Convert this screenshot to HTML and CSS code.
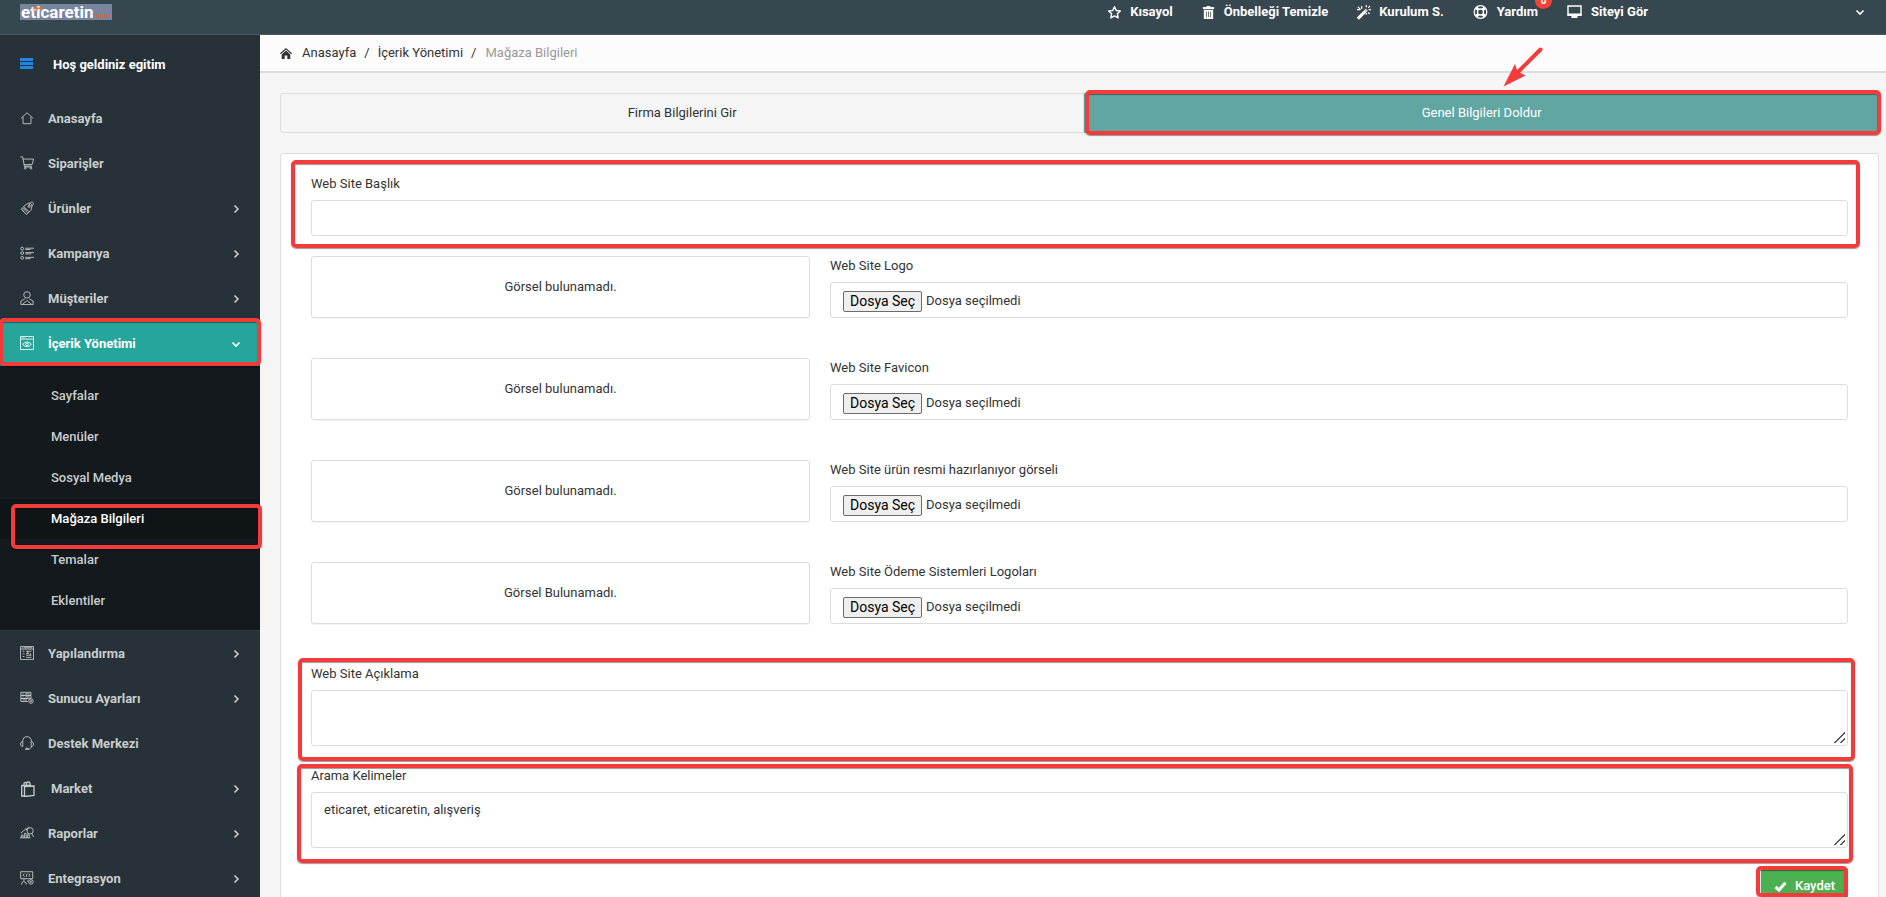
FILE: index.html
```html
<!DOCTYPE html>
<html lang="tr">
<head>
<meta charset="utf-8">
<title>Mağaza Bilgileri</title>
<link rel="stylesheet" href="styles.css">
</head>
<body>
<header class="navbar">
  <a class="logo" href="#"><span class="logo-name">eticaretin</span><span class="logo-tld">.com</span>
    <svg class="logo-mark" viewBox="0 0 9 5"><path d="M0 1h9M1 0v4M4 0v4M7.500 0v4" stroke="#e8792e" fill="none"/></svg>
  </a>
  <nav class="nav-links">
    <a href="#"><svg class="icon" viewBox="0 0 16 16"><path d="M8 1.800l1.900 4 4.300.6-3.100 3 .8 4.400L8 11.700l-3.900 2.100.8-4.400-3.100-3 4.300-.6z" fill="none" stroke="currentColor" stroke-width="1.500" stroke-linejoin="round"/></svg>Kısayol</a>
    <a href="#"><svg class="icon" viewBox="0 0 16 16"><path d="M6 2V1h4v1h4v2.200H2V2zM3 5h10v10H3z" fill="currentColor"/><path d="M5.800 7v6M8 7v6M10.200 7v6" stroke="#37474f" stroke-width=".8"/></svg>Önbelleği Temizle</a>
    <a href="#"><svg class="icon" viewBox="0 0 16 16"><path d="M2 14.500L11.500 5" stroke="currentColor" stroke-width="3.200"/><path d="M2 2l3 3M6 1v3M1 5h3M15 1l-2 2M11 0v2.500M13.500 5H16M13 8l1.500 1.500M11 8.500v2" stroke="currentColor" stroke-width="1.300"/><path d="M9.500 7l1.800-1.800" stroke="#37474f" stroke-width=".9"/></svg>Kurulum S.</a>
    <a href="#" class="has-badge"><svg class="icon icon-wide" viewBox="0 0 16 16" fill="none" stroke="currentColor"><circle cx="8" cy="8" r="6.300" stroke-width="1.300"/><circle cx="8" cy="8" r="3" stroke-width="1.300"/><path d="M3.700 3.700l2.200 2.200M12.300 3.700l-2.200 2.200M3.700 12.300l2.200-2.200M12.300 12.300l-2.200-2.200" stroke-width="3"/></svg>Yardım<span class="badge">0</span></a>
    <a href="#"><svg class="icon icon-wide" viewBox="0 0 16 16"><path d="M1.500 2h13v9h-13z" fill="none" stroke="currentColor" stroke-width="1.400"/><path d="M1 9.500h14V12h-4v2H5v-2H1z" fill="currentColor"/></svg>Siteyi Gör</a>
  </nav>
  <button class="user-menu" type="button" aria-label="Hesap"><svg class="caret" viewBox="0 0 12 12"><path d="M2.500 4.500L6 8l3.500-3.500"/></svg></button>
</header>
<div class="layout">
  <aside class="sidebar">
    <div class="welcome"><svg class="icon-menu" viewBox="0 0 13 11"><path d="M0 1.500h13M0 5.500h13M0 9.500h13"/></svg>Hoş geldiniz egitim</div>
    <ul class="menu">
      <li><a href="#"><svg class="line" viewBox="0 0 16 16"><path d="M1 8.500L8 2l7 6.500M3.500 7v7.500h9V7"/></svg>Anasayfa</a></li>
      <li><a href="#"><svg class="line" viewBox="0 0 16 16"><path d="M.5 1h2.500l2 10.500h8.500M3.500 3.500h12l-1.500 6-9.500.5M5 12.500h8.500"/><circle cx="6" cy="14" r="1"/><circle cx="12.500" cy="14" r="1"/></svg>Siparişler</a></li>
      <li><a href="#"><svg class="line" viewBox="0 0 16 16"><path d="M6 4.500l5-2.500 3 3-1.500 5.500-5 5-6-6zM3 8l6 6M4.500 6.500l6 6M2 9.500l3 3.500M5 8l3 3"/><circle cx="10.500" cy="6" r="1.300"/><path d="M10.500 6c0-3 2-5.500 4-4.500s.5 3.500-2 4.500"/></svg>Ürünler<svg class="caret" viewBox="0 0 12 12"><path d="M4.500 2.500L8 6l-3.500 3.500"/></svg></a></li>
      <li><a href="#"><svg class="line" viewBox="0 0 16 16"><path d="M6 2.500h10M6 4h6M6 7.500h10M6 9h7M6 13h10M6 14.500h6"/><circle cx="2.500" cy="3" r="1.600"/><circle cx="2.500" cy="8" r="1.600"/><circle cx="2.500" cy="13.500" r="1.600"/></svg>Kampanya<svg class="caret" viewBox="0 0 12 12"><path d="M4.500 2.500L8 6l-3.500 3.500"/></svg></a></li>
      <li><a href="#"><svg class="line" viewBox="0 0 16 16"><circle cx="8" cy="4.500" r="3.700"/><path d="M5.500 9l-4.500 2.500V15.500h14v-4L10.500 9M3 15l5-4 5 4"/></svg>Müşteriler<svg class="caret" viewBox="0 0 12 12"><path d="M4.500 2.500L8 6l-3.500 3.500"/></svg></a></li>
      <li class="open"><a href="#"><svg class="line" viewBox="0 0 16 16"><path d="M.5.5h15v15H.5zM.5 3.500h15M2 2h1M4 2h1M3 9.500q5-5.500 10 0-5 5.500-10 0z"/><circle cx="8" cy="9.500" r="1.500"/></svg>İçerik Yönetimi<svg class="caret" viewBox="0 0 12 12"><path d="M2.500 4.500L6 8l3.500-3.500"/></svg></a><span class="mark mark-section"></span>
        <ul class="submenu">
          <li><a href="#">Sayfalar</a></li>
          <li><a href="#">Menüler</a></li>
          <li><a href="#">Sosyal Medya</a></li>
          <li class="current"><a href="#">Mağaza Bilgileri</a><span class="mark mark-page"></span></li>
          <li><a href="#">Temalar</a></li>
          <li><a href="#">Eklentiler</a></li>
        </ul>
      </li>
      <li><a href="#"><svg class="line" viewBox="0 0 16 16"><path d="M.5.5h15v15H.5zM.5 3.500h15M2 2h1M4 2h10M3 6h2M3 9h2M3 12h2M7 6h6M7 8.500h3M12 8.500v2M7 10.500h6M7 13h6M9 6v3"/></svg>Yapılandırma<svg class="caret" viewBox="0 0 12 12"><path d="M4.500 2.500L8 6l-3.500 3.500"/></svg></a></li>
      <li><a href="#"><svg class="line" viewBox="0 0 16 16"><path d="M1 1.500h11.500v3.500H1zM1 5h11.500v3.500H1zM1 8.500h9M1 8.500V12h8M3 3.200h1M6 3.200h5M3 6.700h1M6 6.700h5M3 10.200h5"/><circle cx="12.500" cy="11.500" r="2.600"/><circle cx="12.500" cy="11.500" r=".8"/></svg>Sunucu Ayarları<svg class="caret" viewBox="0 0 12 12"><path d="M4.500 2.500L8 6l-3.500 3.500"/></svg></a></li>
      <li><a href="#"><svg class="line" viewBox="0 0 16 16"><path d="M3 6.500C3 2.500 5 .8 8 .8s5 1.700 5 5.700M3.200 6.500v5.500C1.500 12 .6 11 .6 9.200S1.500 6.500 3.200 6.500zM12.800 6.500V12c1.700 0 2.600-1 2.600-2.800s-.9-2.700-2.600-2.700zM12.800 12c0 2-1.300 3-3.300 3M6.500 14h3v1.500h-3z"/></svg>Destek Merkezi</a></li>
      <li><a href="#" class="shifted"><svg class="bag" viewBox="0 0 15 16"><path d="M1.700 4.500h9.500M1.700 4v11h3M4.500 5.500l9.500-.5v9.500l-9.500 1zM4 4V2.500C4 1 6.500 1 6.500 2.500V4M6.500 2.500C6.500.5 10 .5 10 2.500V4"/></svg>Market<svg class="caret" viewBox="0 0 12 12"><path d="M4.500 2.500L8 6l-3.500 3.500"/></svg></a></li>
      <li><a href="#"><svg class="line" viewBox="0 0 16 16"><path d="M0 13.500h12M1.500 13.500v-3h2v3M5 13.500v-5h2v5M8.500 13.500V10h2v3.500M1 8l6-5 1 1.500M7 4.500L10 1"/><circle cx="11.500" cy="5.500" r="3.600"/><path d="M13.500 8.500l2 4"/></svg>Raporlar<svg class="caret" viewBox="0 0 12 12"><path d="M4.500 2.500L8 6l-3.500 3.500"/></svg></a></li>
      <li><a href="#"><svg class="line" viewBox="0 0 16 16"><path d="M.8.800h13.700v8H.8zM5 3L3.500 4.800 5 6.500M10 3l1.500 1.800L10 6.500M8.200 3L7 6.500M2 15.500v-2l2-1.500 3 1.500v2M4.500 9v3M8 11.500h2"/><circle cx="12.500" cy="12.500" r="2.600"/><circle cx="12.500" cy="12.500" r=".7"/></svg>Entegrasyon<svg class="caret" viewBox="0 0 12 12"><path d="M4.500 2.500L8 6l-3.500 3.500"/></svg></a></li>
    </ul>
  </aside>
  <main class="main">
    <nav class="breadcrumb">
      <svg class="home" viewBox="0 0 12 12"><path d="M0 6.300L6 .9l6 5.400-.8.900L6 2.600.8 7.200z"/><path d="M6 3.600l4.300 3.800V12H7.300V8.500H4.700V12H1.700V7.400z"/></svg>
      <a href="#">Anasayfa</a><span>/</span><a href="#">İçerik Yönetimi</a><span>/</span><span class="here">Mağaza Bilgileri</span>
    </nav>
    <div class="content">
      <div class="tabs">
        <button type="button" class="tab">Firma Bilgilerini Gir</button>
        <div class="tab-slot">
          <button type="button" class="tab active">Genel Bilgileri Doldur</button>
          <span class="mark mark-tab"></span>
          <svg class="arrow" viewBox="0 0 42 42"><path d="M38.500 2.500L14 27" stroke="#f33b3b" stroke-width="4" stroke-linecap="round"/><path d="M1.500 39.500L13 17l2.500 7.500 8 4z" fill="#f33b3b"/></svg>
        </div>
      </div>
      <form class="panel">
        <div class="field">
          <label for="title">Web Site Başlık</label>
          <input class="control" id="title" type="text">
          <span class="mark mark-title"></span>
        </div>
        <div class="row">
          <div class="preview">Görsel bulunamadı.</div>
          <div class="upload"><label for="logo">Web Site Logo</label>
            <div class="control file"><input id="logo" type="file"><label class="file-button" for="logo">Dosya Seç</label><span>Dosya seçilmedi</span></div></div>
        </div>
        <div class="row">
          <div class="preview">Görsel bulunamadı.</div>
          <div class="upload"><label for="favicon">Web Site Favicon</label>
            <div class="control file"><input id="favicon" type="file"><label class="file-button" for="favicon">Dosya Seç</label><span>Dosya seçilmedi</span></div></div>
        </div>
        <div class="row">
          <div class="preview">Görsel bulunamadı.</div>
          <div class="upload"><label for="placeholder">Web Site ürün resmi hazırlanıyor görseli</label>
            <div class="control file"><input id="placeholder" type="file"><label class="file-button" for="placeholder">Dosya Seç</label><span>Dosya seçilmedi</span></div></div>
        </div>
        <div class="row">
          <div class="preview">Görsel Bulunamadı.</div>
          <div class="upload"><label for="payment">Web Site Ödeme Sistemleri Logoları</label>
            <div class="control file"><input id="payment" type="file"><label class="file-button" for="payment">Dosya Seç</label><span>Dosya seçilmedi</span></div></div>
        </div>
        <div class="field">
          <label for="description">Web Site Açıklama</label>
          <textarea class="control" id="description"></textarea>
          <span class="mark mark-description"></span>
        </div>
        <div class="field">
          <label for="keywords">Arama Kelimeler</label>
          <textarea class="control" id="keywords">eticaret, eticaretin, alışveriş</textarea>
          <span class="mark mark-keywords"></span>
        </div>
        <div class="actions">
          <div class="save-slot">
            <button class="save" type="submit"><svg viewBox="0 0 13 11"><path d="M1.500 6l3.500 3L11.500 1.800"/></svg>Kaydet</button>
            <span class="mark mark-save"></span>
          </div>
        </div>
      </form>
    </div>
  </main>
</div>
</body>
</html>
```
FILE: styles.css
```css
* { box-sizing: border-box; }

body {
  margin: 0;
  height: 100vh;
  overflow: hidden;
  background: #f5f5f5;
  color: #333;
  font: 13px/20px Roboto, "Noto Sans", sans-serif;
}

a { color: inherit; text-decoration: none; }
ul { list-style: none; margin: 0; padding: 0; }
button, input, textarea { font: inherit; color: inherit; }

/* Top bar */
.navbar {
  display: flex;
  align-items: flex-start;
  height: 35px;
  padding: 2px 20px 0;
  background: #37474f;
  border-bottom: 1px solid #4b5a62;
  color: #fff;
}
.logo {
  position: relative;
  display: flex;
  align-items: baseline;
  min-width: 92px;
  height: 16px;
  margin-top: 2px;
  padding-left: 1px;
  background: #77869e;
  line-height: 16px;
}
.logo-name { font-size: 17px; font-weight: 700; }
.logo-tld { color: #d9603b; font-size: 8px; font-weight: 700; font-style: italic; }
.logo-mark { position: absolute; left: 13px; top: 3px; width: 9px; height: 5px; }
.nav-links {
  display: flex;
  gap: 28px;
  margin-left: auto;
  font-weight: 700;
}
.nav-links a { display: flex; align-items: center; gap: 8px; }
.icon { width: 15px; height: 15px; }
.icon-wide { width: 17px; height: 16px; }
.has-badge { position: relative; }
.badge {
  position: absolute;
  right: -14px;
  top: -10px;
  width: 17px;
  height: 17px;
  border-radius: 50%;
  background: #f44336;
  font-size: 10px;
  line-height: 17px;
  text-align: center;
}
.user-menu {
  display: flex;
  align-items: center;
  justify-content: flex-end;
  width: 218px;
  height: 20px;
  padding: 0;
  border: 0;
  background: none;
  color: #fff;
}
.caret { width: 12px; height: 12px; fill: none; stroke: currentColor; stroke-width: 1.600; }

/* Side menu */
.layout { display: flex; align-items: stretch; }
.sidebar {
  flex: 0 0 260px;
  min-height: 100vh;
  background: #263238;
  color: #c9cccd;
  font-weight: 700;
}
.welcome {
  display: flex;
  align-items: center;
  gap: 20px;
  height: 61px;
  padding: 0 20px 2px;
  color: #fff;
}
.icon-menu { width: 13px; height: 11px; margin-bottom: 2px; stroke: #2086e6; stroke-width: 3; }
.menu > li { position: relative; margin-top: 1px; }
.menu > li > a {
  display: flex;
  align-items: center;
  gap: 14px;
  height: 44px;
  padding: 0 18px 0 20px;
}
.menu > li > a.shifted { gap: 16px; }
.menu .caret { margin-left: auto; }
.line, .bag { width: 14px; height: 14px; margin-bottom: 2px; fill: none; stroke: currentColor; stroke-width: 1; }
.bag { width: 15px; height: 16px; margin-bottom: 0; stroke-width: 1.300; }
.menu > li.open > a { background: #26a69a; color: #fff; }
.submenu {
  padding: 9px 0;
  background: #13191c;
  border-bottom: 1px solid #333d43;
  font-weight: 500;
}
.submenu li { position: relative; margin-top: 1px; }
.submenu a { display: block; padding: 10px 51px; }
.submenu .current { background: #0f1416; color: #fff; }

/* Highlight frames */
.mark {
  position: absolute;
  z-index: 2;
  border: 4px solid #f33b3b;
  border-radius: 5px;
  box-shadow: 0 1px 1px rgba(0, 0, 0, .4), inset 0 1px 1px rgba(0, 0, 0, .4);
  pointer-events: none;
}
.mark-section { top: -4px; left: -1px; right: -1px; height: 48px; }
.mark-page { inset: 5px -2px -10px 11px; }
.mark-tab { inset: -3px -2px -2px 1px; }
.mark-title { inset: -14px -12px -12px -20px; }
.mark-description { inset: -6px -7px -15px -13px; }
.mark-keywords { inset: -2px -5px -15px -14px; }
.mark-save { inset: -2px 0 7px -5px; }
.arrow {
  position: absolute;
  z-index: 3;
  left: 50%;
  bottom: 100%;
  width: 42px;
  height: 42px;
  margin: 0 0 4px 20px;
  fill: none;
}

/* Page */
.main { flex: 1; min-width: 0; }
.breadcrumb {
  display: flex;
  align-items: center;
  gap: 8px;
  height: 38px;
  padding: 0 20px;
  background: #fcfcfc;
  border-bottom: 2px solid #ddd;
}
.home { width: 12px; height: 12px; margin-right: 2px; fill: #333; }
.here { margin-left: 1px; color: #999; }
.content { padding: 20px 7px 0 20px; }
.tabs { display: grid; grid-template-columns: 503fr 497fr; }
.tab {
  width: 100%;
  height: 40px;
  border: 1px solid #ddd;
  border-radius: 3px 0 0 3px;
  background: #f5f5f5;
  cursor: pointer;
}
.tab-slot { position: relative; }
.tab.active {
  display: block;
  border-color: #62a6a2;
  border-radius: 0 3px 3px 0;
  background: #62a6a2;
  color: #fff;
}
.panel {
  margin-top: 20px;
  padding: 20px 30px;
  border: 1px solid #ddd;
  border-radius: 3px;
  background: #fff;
}
.field { position: relative; margin-bottom: 20px; }
.field > label, .upload > label { display: block; margin-bottom: 6px; }
.control {
  display: block;
  width: 100%;
  height: 36px;
  padding: 7px 12px;
  border: 1px solid #ddd;
  border-radius: 3px;
  background: #fff;
  outline: 0;
}
textarea.control { height: 56px; resize: vertical; }
textarea::-webkit-resizer {
  background: linear-gradient(135deg, transparent 46%, #555 46% 56%, transparent 56% 74%, #555 74% 84%, transparent 84%) 2px 2px / 11px 11px no-repeat;
}
.row {
  display: grid;
  grid-template-columns: repeat(12, 1fr);
  gap: 20px;
  margin-bottom: 40px;
}
.preview {
  grid-column: span 4;
  padding: 20px;
  border: 1px solid #ddd;
  border-radius: 3px;
  box-shadow: 0 1px 1px rgba(0, 0, 0, .05);
  text-align: center;
}
.upload { grid-column: span 8; }
.file { display: flex; align-items: center; gap: 4px; position: relative; padding: 8px 12px 6px; }
.file input { position: absolute; width: 1px; height: 1px; opacity: 0; }
.file-button {
  padding: 0 6px;
  border: 1px solid #6b6b6b;
  border-radius: 2px;
  background: #efefef;
  color: #000;
  font-size: 14px;
  line-height: 19px;
}
.actions { display: flex; justify-content: flex-end; }
.save-slot { position: relative; }
.save {
  display: flex;
  align-items: center;
  gap: 8px;
  height: 36px;
  padding: 0 13px;
  border: 0;
  border-radius: 3px;
  background: #4caf50;
  color: #fff;
  font-weight: 500;
}
.save svg { width: 13px; height: 11px; fill: none; stroke: currentColor; stroke-width: 3; }
```
